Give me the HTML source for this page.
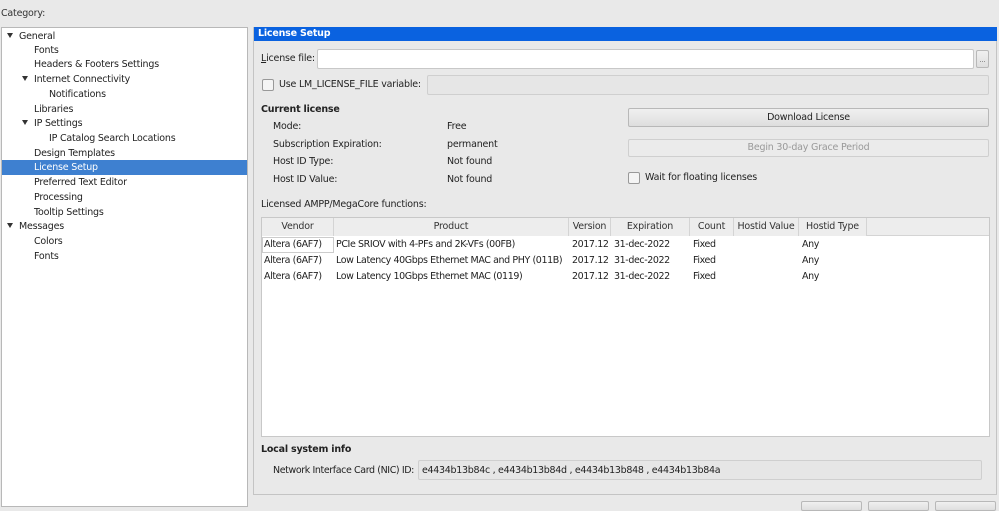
<!DOCTYPE html>
<html><head><meta charset="utf-8"><style>
*{box-sizing:border-box;margin:0;padding:0}
body{width:999px;height:504px;overflow:hidden;background:#e9e9e9;font-family:"DejaVu Sans","Liberation Sans",sans-serif;font-size:9.5px;color:#222;position:relative;letter-spacing:-0.2px}
.a{position:absolute;white-space:nowrap}
.tree{left:1px;top:27px;width:247px;height:480px;background:#fff;border:1px solid #b8b8b8}
.t{position:absolute;white-space:nowrap;height:15px;line-height:15px}
.tri{display:inline-block;width:0;height:0;border-left:3.5px solid transparent;border-right:3.5px solid transparent;border-top:5px solid #333;margin-right:6px;vertical-align:1px}
.panel{left:253px;top:27px;width:744px;height:468px;border:1px solid #c4c4c4;background:#e9e9e9}
.hdr{left:254px;top:27px;width:743px;height:14px;background:#0a62e0;color:#fff;font-weight:bold;padding-left:4px;line-height:14px}
.inp{background:#fff;border:1px solid #c8c8c8;border-radius:2px}
.dis{background:#e6e6e6;border:1px solid #cfcfcf;border-radius:2px}
.btn{border:1px solid #b8b8b8;border-radius:2px;background:linear-gradient(#f0f0f0,#dedede);text-align:center;line-height:17px}
.cb{width:12px;height:12px;border:1px solid #999;border-radius:2px;background:#f4f4f4}
.th{position:absolute;top:0;height:18px;line-height:18px;text-align:center;border-right:1px solid #d4d4d4;background:#ededed;color:#333}
.tb .t{letter-spacing:-0.4px}
</style></head><body>
<div class="a" style="left:1px;top:8px;color:#333">Category:</div>
<div class="a tree">
 <div class="t" style="left:0;top:0;width:245px;top:1px;padding-left:5px"><span class="tri"></span>General</div>
 <div class="t" style="left:32px;top:15px">Fonts</div>
 <div class="t" style="left:32px;top:29px">Headers &amp; Footers Settings</div>
 <div class="t" style="left:20px;top:44px"><span class="tri"></span>Internet Connectivity</div>
 <div class="t" style="left:47px;top:59px">Notifications</div>
 <div class="t" style="left:32px;top:74px">Libraries</div>
 <div class="t" style="left:20px;top:88px"><span class="tri"></span>IP Settings</div>
 <div class="t" style="left:47px;top:103px">IP Catalog Search Locations</div>
 <div class="t" style="left:32px;top:118px">Design Templates</div>
 <div class="t" style="left:0;top:132px;width:245px;background:#3e80d0;color:#fff;padding-left:32px">License Setup</div>
 <div class="t" style="left:32px;top:147px">Preferred Text Editor</div>
 <div class="t" style="left:32px;top:162px">Processing</div>
 <div class="t" style="left:32px;top:177px">Tooltip Settings</div>
 <div class="t" style="left:5px;top:191px"><span class="tri"></span>Messages</div>
 <div class="t" style="left:32px;top:206px">Colors</div>
 <div class="t" style="left:32px;top:221px">Fonts</div>
</div>
<div class="a panel"></div>
<div class="a hdr">License Setup</div>
<div class="a" style="left:261px;top:53px"><u>L</u>icense file:</div>
<div class="a inp" style="left:317px;top:49px;width:657px;height:20px"></div>
<div class="a btn" style="left:976px;top:50px;width:13px;height:18px;line-height:18px;font-size:7px;color:#666">...</div>
<div class="a cb" style="left:262px;top:79px"></div>
<div class="a" style="left:279px;top:79px">Use LM_LICENSE_FILE variable:</div>
<div class="a dis" style="left:427px;top:75px;width:562px;height:20px"></div>
<div class="a" style="left:261px;top:104px;font-weight:bold">Current license</div>
<div class="a" style="left:273px;top:121px">Mode:</div>
<div class="a" style="left:447px;top:121px">Free</div>
<div class="a" style="left:273px;top:139px">Subscription Expiration:</div>
<div class="a" style="left:447px;top:139px">permanent</div>
<div class="a" style="left:273px;top:156px">Host ID Type:</div>
<div class="a" style="left:447px;top:156px">Not found</div>
<div class="a" style="left:273px;top:174px">Host ID Value:</div>
<div class="a" style="left:447px;top:174px">Not found</div>
<div class="a btn" style="left:628px;top:108px;width:361px;height:19px">Download License</div>
<div class="a dis" style="left:628px;top:139px;width:361px;height:18px;text-align:center;line-height:16px;color:#999;background:#ebebeb">Begin 30-day Grace Period</div>
<div class="a cb" style="left:628px;top:172px"></div>
<div class="a" style="left:645px;top:172px">Wait for floating licenses</div>
<div class="a" style="left:261px;top:199px">Licensed AMPP/MegaCore functions:</div>
<div class="a tb" style="left:261px;top:217px;width:729px;height:220px;background:#fff;border:1px solid #c8c8c8">
 <div style="position:absolute;left:0;top:0;width:727px;height:18px;background:#ededed;border-bottom:1px solid #d4d4d4"></div>
 <div class="th" style="left:0;width:72px">Vendor</div>
 <div class="th" style="left:72px;width:235px">Product</div>
 <div class="th" style="left:307px;width:42px">Version</div>
 <div class="th" style="left:349px;width:79px">Expiration</div>
 <div class="th" style="left:428px;width:44px">Count</div>
 <div class="th" style="left:472px;width:65px">Hostid Value</div>
 <div class="th" style="left:537px;width:68px">Hostid Type</div>
 <div style="position:absolute;left:0;top:19px;width:72px;height:16px;border:1px solid #ccc"></div>
 <div class="t" style="left:2px;top:19px">Altera (6AF7)</div><div class="t" style="left:74px;top:19px">PCIe SRIOV with 4-PFs and 2K-VFs (00FB)</div><div class="t" style="left:310px;top:19px">2017.12</div><div class="t" style="left:352px;top:19px">31-dec-2022</div><div class="t" style="left:431px;top:19px">Fixed</div><div class="t" style="left:540px;top:19px">Any</div>
 <div class="t" style="left:2px;top:35px">Altera (6AF7)</div><div class="t" style="left:74px;top:35px">Low Latency 40Gbps Ethernet MAC and PHY (011B)</div><div class="t" style="left:310px;top:35px">2017.12</div><div class="t" style="left:352px;top:35px">31-dec-2022</div><div class="t" style="left:431px;top:35px">Fixed</div><div class="t" style="left:540px;top:35px">Any</div>
 <div class="t" style="left:2px;top:51px">Altera (6AF7)</div><div class="t" style="left:74px;top:51px">Low Latency 10Gbps Ethernet MAC (0119)</div><div class="t" style="left:310px;top:51px">2017.12</div><div class="t" style="left:352px;top:51px">31-dec-2022</div><div class="t" style="left:431px;top:51px">Fixed</div><div class="t" style="left:540px;top:51px">Any</div>
</div>
<div class="a" style="left:261px;top:444px;font-weight:bold">Local system info</div>
<div class="a" style="left:273px;top:465px;letter-spacing:-0.4px">Network Interface Card (NIC) ID:</div>
<div class="a dis" style="left:418px;top:460px;width:564px;height:20px;line-height:20px;padding-left:3px;color:#222;letter-spacing:-0.3px">e4434b13b84c , e4434b13b84d , e4434b13b848 , e4434b13b84a</div>
<div class="a btn" style="left:801px;top:501px;width:61px;height:10px"></div>
<div class="a btn" style="left:868px;top:501px;width:61px;height:10px"></div>
<div class="a btn" style="left:935px;top:501px;width:61px;height:10px"></div>
</body></html>
